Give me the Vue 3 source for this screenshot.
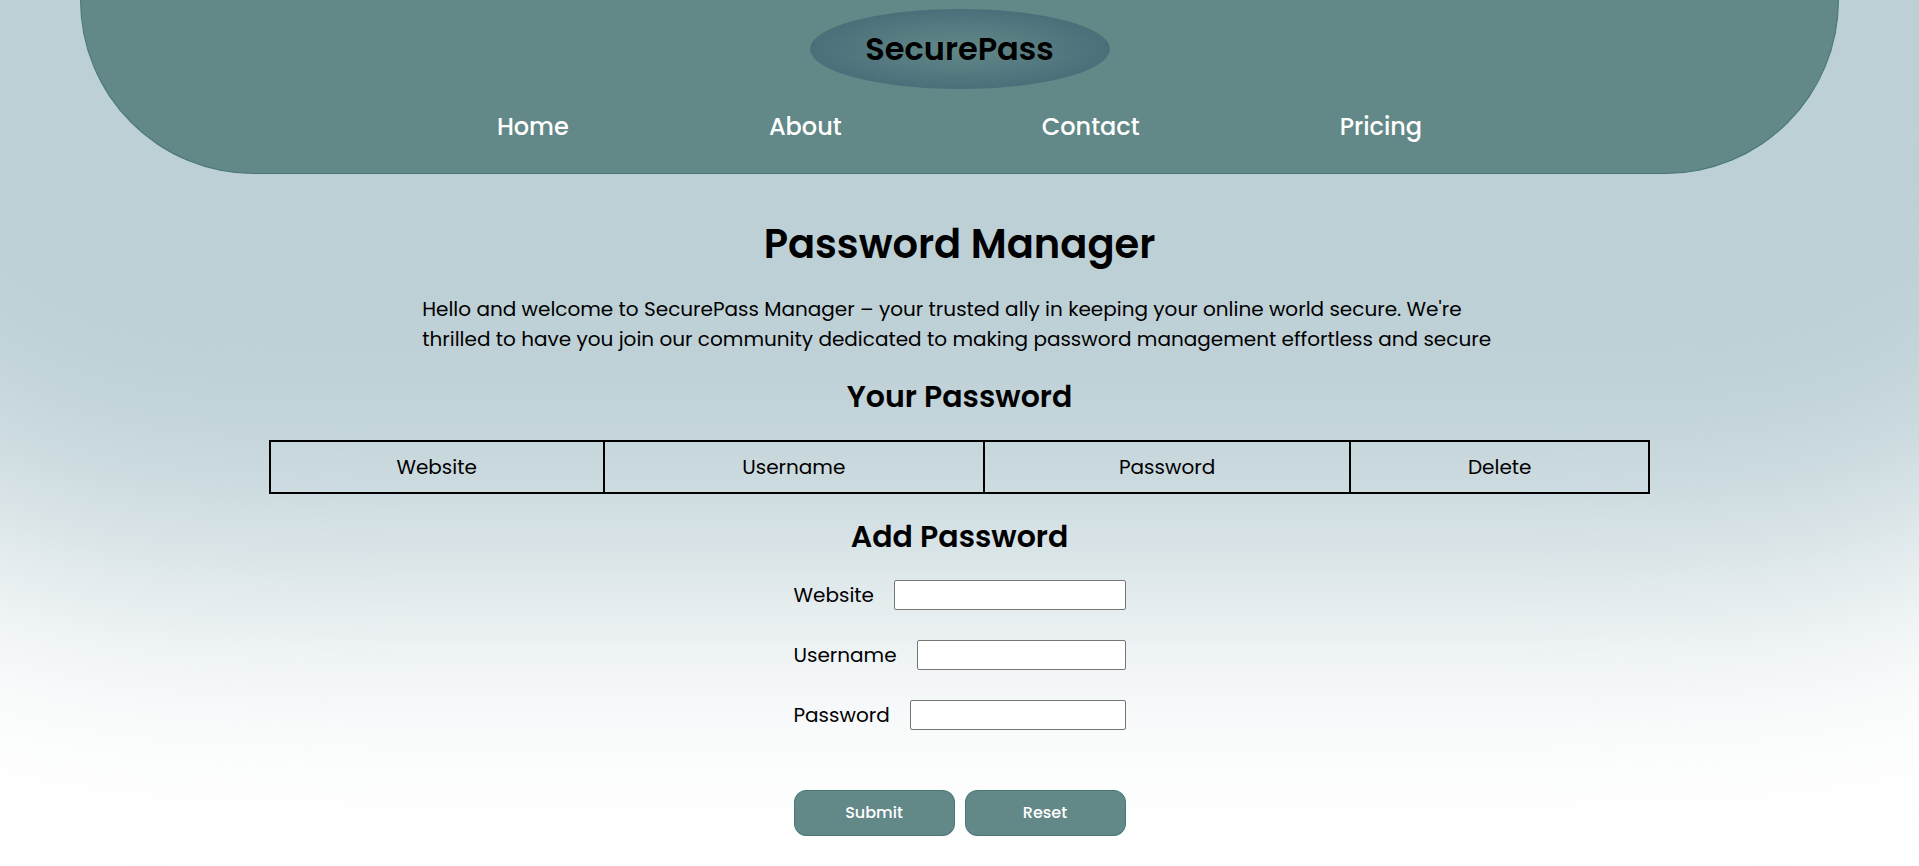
<script setup>
import { reactive } from 'vue'

const links = ['Home', 'About', 'Contact', 'Pricing']
const columns = ['Website', 'Username', 'Password', 'Delete']
const fields = [
  { id: 'website', label: 'Website', type: 'text' },
  { id: 'username', label: 'Username', type: 'text' },
  { id: 'password', label: 'Password', type: 'password' },
]
const entry = reactive({ website: '', username: '', password: '' })
</script>

<template>
  <div class="page">
    <header class="header">
      <div class="logo">SecurePass</div>
      <nav class="nav">
        <a v-for="link in links" :key="link" href="#">{{ link }}</a>
      </nav>
    </header>
    <main class="main">
      <h1>Password Manager</h1>
      <p class="intro">
        Hello and welcome to SecurePass Manager – your trusted ally in keeping your online world secure. We're
        thrilled to have you join our community dedicated to making password management effortless and secure
      </p>
      <h2>Your Password</h2>
      <table class="passwords">
        <thead>
          <tr>
            <th v-for="column in columns" :key="column" scope="col">{{ column }}</th>
          </tr>
        </thead>
      </table>
      <h2>Add Password</h2>
      <form class="form" @submit.prevent>
        <div v-for="field in fields" :key="field.id" class="field">
          <label :for="field.id">{{ field.label }}</label>
          <input :id="field.id" v-model="entry[field.id]" :type="field.type">
        </div>
        <div class="actions">
          <button type="submit">Submit</button>
          <button type="reset">Reset</button>
        </div>
      </form>
    </main>
  </div>
</template>

<style>
body {
  margin: 0;
  background: #fff;
}
</style>

<style scoped>
.page {
  position: relative;
  isolation: isolate;
  min-height: 100vh;
  overflow: hidden;
  box-sizing: border-box;
  color: #000;
  font: 400 20px/30px Poppins, Inter, "Liberation Sans", sans-serif;
}

/* soft glow that spreads out from the header */
.page::before {
  content: "";
  position: absolute;
  z-index: -1;
  top: -400px;
  right: -320px;
  left: -320px;
  height: 974px;
  border-radius: 0 0 500px 500px;
  background: #bdd0d6;
  filter: blur(125px);
}

.header {
  display: flex;
  flex-direction: column;
  align-items: center;
  box-sizing: border-box;
  margin: 0 80px;
  padding: 9px 0 28px;
  border: 1px solid #477777;
  border-top: 0;
  border-radius: 0 0 174px 174px;
  background: #628888;
}

.logo {
  display: flex;
  align-items: center;
  justify-content: center;
  width: 300px;
  height: 80px;
  border-radius: 50%;
  background: radial-gradient(#628888, #426574);
  font-size: 32px;
  font-weight: 600;
}

.nav {
  display: flex;
  gap: 200px;
  margin-top: 20px;
}

.nav a {
  color: #fff;
  font-size: 24px;
  font-weight: 500;
  line-height: 36px;
  text-decoration: none;
}

.main {
  display: flex;
  flex-direction: column;
  align-items: center;
  padding: 40px 0 30px;
}

h1,
h2,
p {
  margin: 0;
}

h1 {
  font-size: 40px;
  font-weight: 600;
  line-height: 60px;
}

.intro {
  width: 56%;
  margin: 20px 0;
}

h2 {
  font-size: 30px;
  font-weight: 600;
  line-height: 46px;
}

.passwords {
  width: 72%;
  margin: 20px 0;
  border-collapse: collapse;
}

.passwords th {
  padding: 10px 40px;
  border: 2px solid #000;
  font-weight: 400;
}

.form {
  width: 332px;
  margin-top: 20px;
}

.field {
  display: flex;
  align-items: center;
  gap: 20px;
  margin-bottom: 30px;
}

.field input {
  flex: 1;
  box-sizing: border-box;
  min-width: 0;
  height: 30px;
  border: 1px solid #767676;
  border-radius: 2px;
  background: #fff;
  font: inherit;
}

.actions {
  display: flex;
  gap: 10px;
  margin-top: 60px;
}

.actions button {
  flex: 1;
  height: 46px;
  padding: 0;
  border: 1px solid #477777;
  border-radius: 12px;
  background: #628888;
  color: #fff;
  font: 500 16px/24px Poppins, Inter, "Liberation Sans", sans-serif;
}
</style>
